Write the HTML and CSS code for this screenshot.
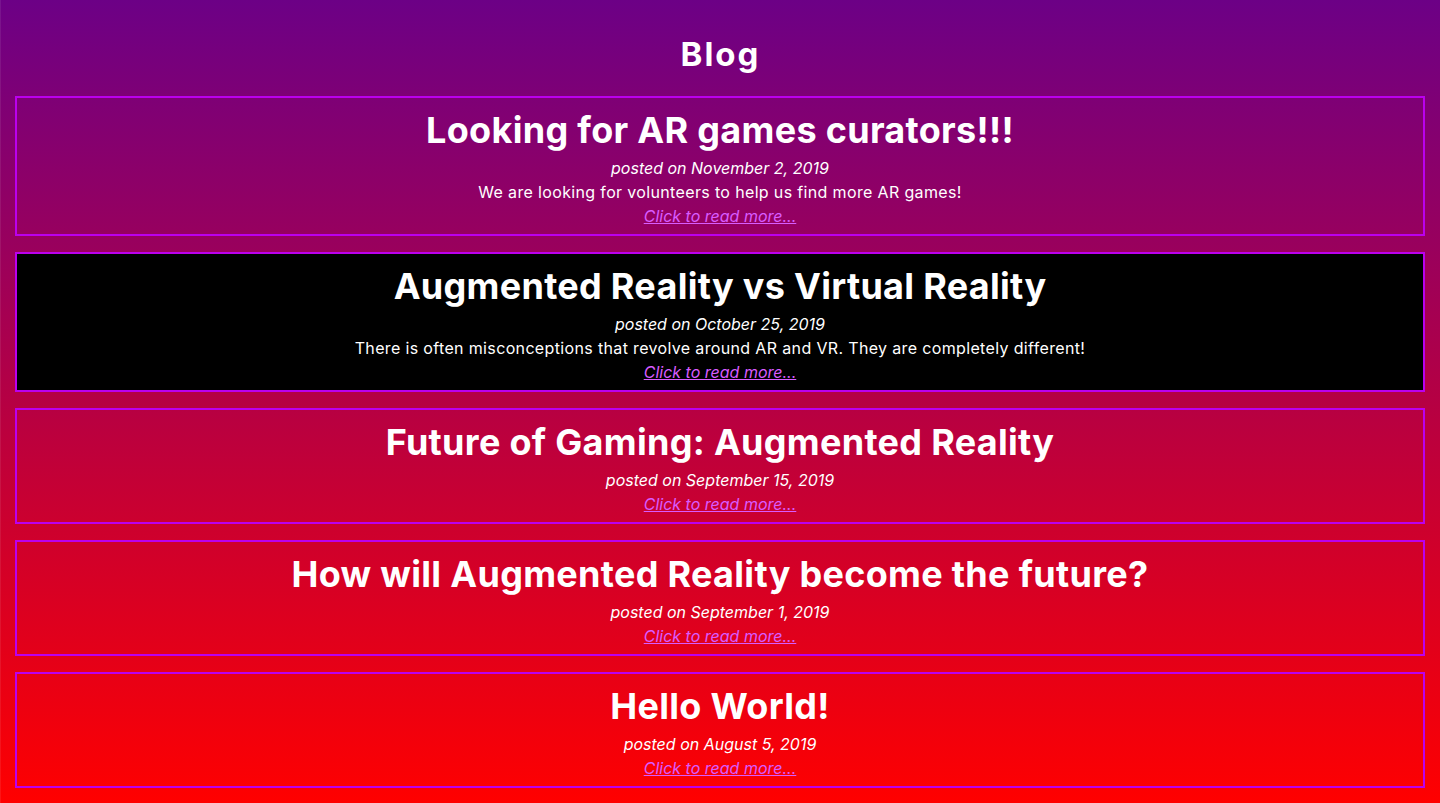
FILE: index.html
```html
<!DOCTYPE html>
<html lang="en">
<head>
<meta charset="utf-8">
<title>Blog</title>
<link rel="stylesheet" href="styles.css">
</head>
<body>
<h1 class="page-title">Blog</h1>
<main class="posts">
  <article class="post">
    <h2 class="post-title">Looking for AR games curators!!!</h2>
    <p class="post-date">posted on November 2, 2019</p>
    <p class="post-desc">We are looking for volunteers to help us find more AR games!</p>
    <a class="post-link" href="#">Click to read more...</a>
  </article>
  <article class="post post-active">
    <h2 class="post-title">Augmented Reality vs Virtual Reality</h2>
    <p class="post-date">posted on October 25, 2019</p>
    <p class="post-desc">There is often misconceptions that revolve around AR and VR. They are completely different!</p>
    <a class="post-link" href="#">Click to read more...</a>
  </article>
  <article class="post">
    <h2 class="post-title">Future of Gaming: Augmented Reality</h2>
    <p class="post-date">posted on September 15, 2019</p>
    <a class="post-link" href="#">Click to read more...</a>
  </article>
  <article class="post">
    <h2 class="post-title">How will Augmented Reality become the future?</h2>
    <p class="post-date">posted on September 1, 2019</p>
    <a class="post-link" href="#">Click to read more...</a>
  </article>
  <article class="post">
    <h2 class="post-title">Hello World!</h2>
    <p class="post-date">posted on August 5, 2019</p>
    <a class="post-link" href="#">Click to read more...</a>
  </article>
</main>
</body>
</html>
```
FILE: styles.css
```css
html, body {
  margin: 0;
  padding: 0;
}
body {
  min-height: 803px;
  background: linear-gradient(to bottom, #6c0086 0%, #ff0000 100%);
  font-family: "Inter", "Open Sans", sans-serif;
  color: #ffffff;
  text-align: center;
  display: flex;
  flex-direction: column;
  box-sizing: border-box;
  padding-bottom: 15px;
  border-left: 1px solid rgba(255, 255, 255, 0.08);
}
.page-title {
  margin: 30px 0 18px;
  font-size: 33px;
  line-height: 48px;
  font-weight: 700;
  letter-spacing: 2px;
}
.posts {
  display: flex;
  flex-direction: column;
  gap: 16px;
  padding: 0 15px 0 14px;
}
.post {
  border: 2px solid #bb00ee;
  padding: 8px 10px 6px;
  display: flex;
  flex-direction: column;
  align-items: center;
}
.post-active {
  background: #000000;
}
.post-title {
  margin: 0;
  font-size: 36px;
  line-height: 48px;
  font-weight: 700;
  letter-spacing: 0.3px;
}
.post-date {
  margin: 2px 0 0;
  font-size: 16px;
  line-height: 24px;
  font-style: italic;
}
.post-desc {
  margin: 0;
  font-size: 16px;
  line-height: 24px;
  letter-spacing: 0.35px;
}
.post-link {
  font-size: 16px;
  line-height: 24px;
  font-style: italic;
  color: #d85cff;
  text-decoration: underline;
}
```
